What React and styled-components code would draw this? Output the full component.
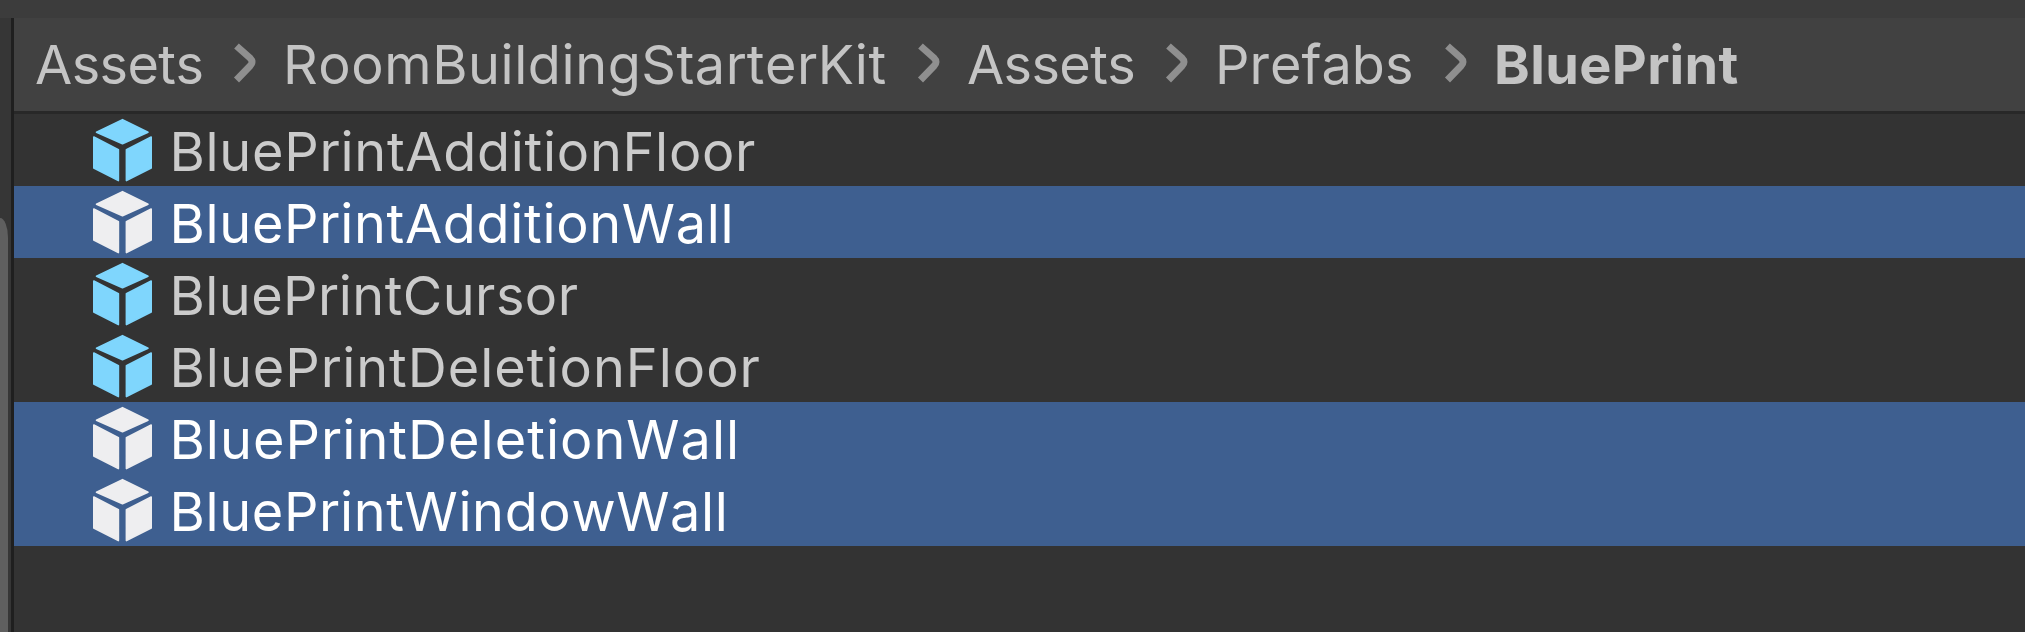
import React from "react";
import styled, { createGlobalStyle } from "styled-components";

const GlobalStyle = createGlobalStyle`
  * { box-sizing: border-box; }
  body { margin: 0; background: #333333; overflow: hidden; }
`;

const Window = styled.div`
  display: flex;
  flex-direction: column;
  width: 100%;
  height: 632px;
  background: #333333;
  font-family: Inter, "Liberation Sans", sans-serif;
  font-size: 54px;
  font-kerning: none;
  white-space: nowrap;
`;

const TopStrip = styled.div`
  flex: none;
  height: 18px;
  background: #3c3c3c;
`;

const Body = styled.div`
  display: flex;
  flex: 1;
  min-height: 0;
`;

const TreePane = styled.div`
  flex: none;
  width: 11px;
  padding-top: 200px;
  background: #363636;
`;

const ScrollThumb = styled.div`
  width: 8px;
  height: 100%;
  border-top-right-radius: 9px 22px;
  background: #5f5f5f;
`;

const Splitter = styled.div`
  flex: none;
  width: 3px;
  background: #1f1f1f;
`;

const AssetPane = styled.div`
  flex: 1;
  min-width: 0;
`;

const Breadcrumbs = styled.nav`
  display: flex;
  align-items: center;
  height: 96px;
  padding-left: 21px;
  border-bottom: 3px solid #282828;
  background: #414141;
  color: #c4c4c4;
`;

const Crumb = styled.span`
  flex: none;
  width: ${(p) => p.$width}px;
  letter-spacing: ${(p) => p.$tracking}px;
  font-weight: ${(p) => (p.$current ? 700 : 400)};
`;

const Chevron = styled.svg`
  flex: none;
  width: 26px;
  height: 42px;
  margin: 0 24.5px 3px 0;
`;

const Row = styled.div`
  display: flex;
  align-items: center;
  height: 72px;
  padding-left: 78px;
  background: ${(p) => (p.$selected ? "#3e5f90" : "#333333")};
  color: ${(p) => (p.$selected ? "#ffffff" : "#cbcbcb")};
`;

const Cube = styled.svg`
  flex: none;
  width: 60px;
  height: 66px;
  margin-top: 2px;
  fill: ${(p) => (p.$selected ? "#eeeef0" : "#7fd6fd")};
  stroke: ${(p) => (p.$selected ? "#eeeef0" : "#7fd6fd")};
`;

const Name = styled.span`
  padding-top: 2px;
  margin-left: 17.5px;
  letter-spacing: ${(p) => p.$tracking}px;
`;

const crumbs = [
  { label: "Assets", width: 197.5, tracking: -0.6 },
  { label: "RoomBuildingStarterKit", width: 633.5, tracking: 0.58 },
  { label: "Assets", width: 197.5, tracking: -0.65 },
  { label: "Prefabs", width: 228.5, tracking: 0.05 },
  { label: "BluePrint", width: 250, tracking: 0.4 },
];

const assets = [
  { name: "BluePrintAdditionFloor", tracking: 0.72 },
  { name: "BluePrintAdditionWall", tracking: 0.68, selected: true },
  { name: "BluePrintCursor", tracking: 0.45 },
  { name: "BluePrintDeletionFloor", tracking: 1.0 },
  { name: "BluePrintDeletionWall", tracking: 1.03, selected: true },
  { name: "BluePrintWindowWall", tracking: 0.64, selected: true },
];

function PrefabIcon({ selected }) {
  return (
    <Cube $selected={selected} viewBox="0 0 60 66" strokeWidth="1.6" strokeLinejoin="round">
      <path d="M30.5 1.6 L56 14.2 L30.5 25.8 L4.5 14.2 Z" />
      <path d="M1.8 19 L26.4 31.8 V62.6 L1.8 50 Z" />
      <path d="M59.2 19 L34.4 31.8 V62.6 L59.2 50 Z" />
    </Cube>
  );
}

export default function App() {
  return (
    <>
      <GlobalStyle />
      <Window>
        <TopStrip />
        <Body>
          <TreePane>
            <ScrollThumb />
          </TreePane>
          <Splitter />
          <AssetPane>
            <Breadcrumbs>
              {crumbs.map((c, i) => (
                <React.Fragment key={i}>
                  {i > 0 && (
                    <Chevron viewBox="0 0 26 42" fill="none" stroke="#8f8f8f" strokeWidth="7">
                      <path d="M3.5 4 L17 16 Q21 20 17 24 L3.5 38" />
                    </Chevron>
                  )}
                  <Crumb $width={c.width} $tracking={c.tracking} $current={i === crumbs.length - 1}>
                    {c.label}
                  </Crumb>
                </React.Fragment>
              ))}
            </Breadcrumbs>
            {assets.map((a) => (
              <Row key={a.name} $selected={a.selected}>
                <PrefabIcon selected={a.selected} />
                <Name $tracking={a.tracking}>{a.name}</Name>
              </Row>
            ))}
          </AssetPane>
        </Body>
      </Window>
    </>
  );
}
